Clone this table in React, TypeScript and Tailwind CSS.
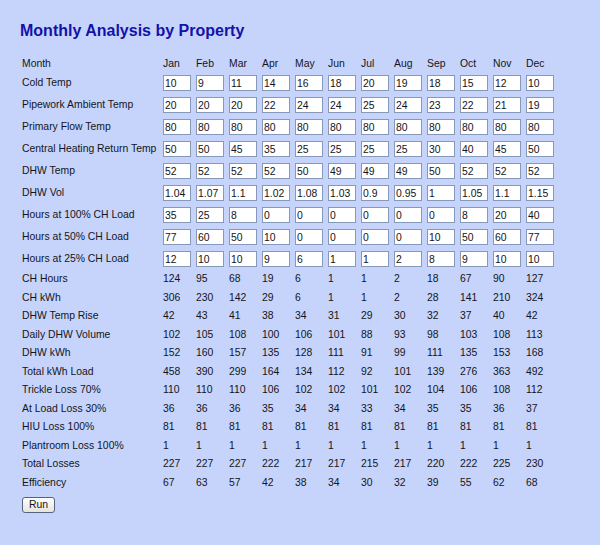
import { useState } from "react";

const months = ["Jan", "Feb", "Mar", "Apr", "May", "Jun", "Jul", "Aug", "Sep", "Oct", "Nov", "Dec"];

const inputRows: { label: string; values: string[] }[] = [
  { label: "Cold Temp", values: ["10", "9", "11", "14", "16", "18", "20", "19", "18", "15", "12", "10"] },
  { label: "Pipework Ambient Temp", values: ["20", "20", "20", "22", "24", "24", "25", "24", "23", "22", "21", "19"] },
  { label: "Primary Flow Temp", values: ["80", "80", "80", "80", "80", "80", "80", "80", "80", "80", "80", "80"] },
  { label: "Central Heating Return Temp", values: ["50", "50", "45", "35", "25", "25", "25", "25", "30", "40", "45", "50"] },
  { label: "DHW Temp", values: ["52", "52", "52", "52", "50", "49", "49", "49", "50", "52", "52", "52"] },
  { label: "DHW Vol", values: ["1.04", "1.07", "1.1", "1.02", "1.08", "1.03", "0.9", "0.95", "1", "1.05", "1.1", "1.15"] },
  { label: "Hours at 100% CH Load", values: ["35", "25", "8", "0", "0", "0", "0", "0", "0", "8", "20", "40"] },
  { label: "Hours at 50% CH Load", values: ["77", "60", "50", "10", "0", "0", "0", "0", "10", "50", "60", "77"] },
  { label: "Hours at 25% CH Load", values: ["12", "10", "10", "9", "6", "1", "1", "2", "8", "9", "10", "10"] },
];

const resultRows: { label: string; values: number[] }[] = [
  { label: "CH Hours", values: [124, 95, 68, 19, 6, 1, 1, 2, 18, 67, 90, 127] },
  { label: "CH kWh", values: [306, 230, 142, 29, 6, 1, 1, 2, 28, 141, 210, 324] },
  { label: "DHW Temp Rise", values: [42, 43, 41, 38, 34, 31, 29, 30, 32, 37, 40, 42] },
  { label: "Daily DHW Volume", values: [102, 105, 108, 100, 106, 101, 88, 93, 98, 103, 108, 113] },
  { label: "DHW kWh", values: [152, 160, 157, 135, 128, 111, 91, 99, 111, 135, 153, 168] },
  { label: "Total kWh Load", values: [458, 390, 299, 164, 134, 112, 92, 101, 139, 276, 363, 492] },
  { label: "Trickle Loss 70%", values: [110, 110, 110, 106, 102, 102, 101, 102, 104, 106, 108, 112] },
  { label: "At Load Loss 30%", values: [36, 36, 36, 35, 34, 34, 33, 34, 35, 35, 36, 37] },
  { label: "HIU Loss 100%", values: [81, 81, 81, 81, 81, 81, 81, 81, 81, 81, 81, 81] },
  { label: "Plantroom Loss 100%", values: [1, 1, 1, 1, 1, 1, 1, 1, 1, 1, 1, 1] },
  { label: "Total Losses", values: [227, 227, 227, 222, 217, 217, 215, 217, 220, 222, 225, 230] },
  { label: "Efficiency", values: [67, 63, 57, 42, 38, 34, 30, 32, 39, 55, 62, 68] },
];

const App = () => {
  const [inputs, setInputs] = useState(inputRows.map((r) => [...r.values]));

  const update = (row: number, col: number, value: string) => {
    setInputs((prev) => prev.map((r, i) => (i === row ? r.map((v, j) => (j === col ? value : v)) : r)));
  };

  return (
    <div className="w-[600px] h-[545px] bg-[#c6d4fc] pt-[21px] text-[#141420] font-['Liberation_Sans',Arial,sans-serif]">
      <h1 className="pl-[20px] text-[16px] leading-[20px] font-bold text-[#1212aa]">Monthly Analysis by Property</h1>

      <div className="mt-[14px] pl-[22px] text-[10.4px] leading-[12px]">
        {/* Header */}
        <div className="grid grid-cols-[141px_repeat(12,33px)] h-[17px] items-center">
          <span>Month</span>
          {months.map((m) => (
            <span key={m}>{m}</span>
          ))}
        </div>

        {/* Editable inputs */}
        {inputRows.map((row, i) => (
          <div key={row.label} className="grid grid-cols-[141px_repeat(12,33px)] h-[22px] items-center">
            <span className="whitespace-nowrap">{row.label}</span>
            {inputs[i].map((v, j) => (
              <input
                key={j}
                type="text"
                value={v}
                onChange={(e) => update(i, j, e.target.value)}
                className="w-[28px] h-[16px] bg-white border border-[#8799b8] px-[1px] text-[10.4px] leading-[12px] text-[#141420] outline-none"
              />
            ))}
          </div>
        ))}

        {/* Calculated values */}
        {resultRows.map((row) => (
          <div key={row.label} className="grid grid-cols-[141px_repeat(12,33px)] h-[18.5px] items-center">
            <span className="whitespace-nowrap">{row.label}</span>
            {row.values.map((v, j) => (
              <span key={j}>{v}</span>
            ))}
          </div>
        ))}

        <button className="mt-[5px] w-[33px] h-[16px] rounded-[3px] border border-[#55647e] bg-gradient-to-b from-white to-[#e6e4da] text-[10.4px] leading-[12px] text-[#141420]">
          Run
        </button>
      </div>
    </div>
  );
};

export default App;
